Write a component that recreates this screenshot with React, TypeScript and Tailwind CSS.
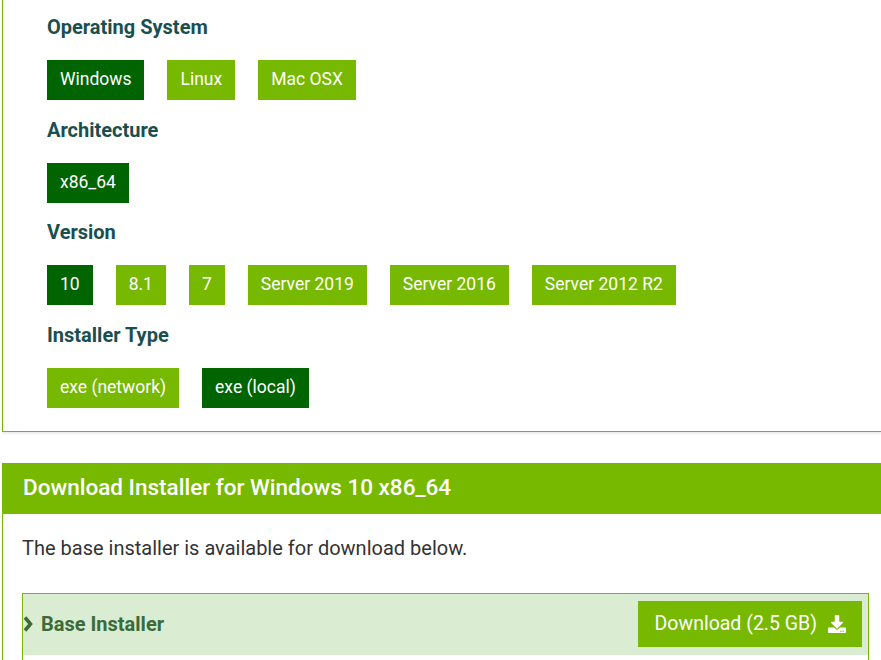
import React from 'react';
import { FaDownload } from 'react-icons/fa';

type Opt = { label: string; active?: boolean };

const sections: { title: string; options: Opt[] }[] = [
  { title: 'Operating System', options: [{ label: 'Windows', active: true }, { label: 'Linux' }, { label: 'Mac OSX' }] },
  { title: 'Architecture', options: [{ label: 'x86_64', active: true }] },
  {
    title: 'Version',
    options: [
      { label: '10', active: true },
      { label: '8.1' },
      { label: '7' },
      { label: 'Server 2019' },
      { label: 'Server 2016' },
      { label: 'Server 2012 R2' },
    ],
  },
  { title: 'Installer Type', options: [{ label: 'exe (network)' }, { label: 'exe (local)', active: true }] },
];

const OptionButton: React.FC<Opt> = ({ label, active }) => (
  <button
    className={
      'h-10 px-[13px] text-[17.5px] text-white leading-none ' + (active ? 'bg-[#006400]' : 'bg-[#76b900]')
    }
  >
    {label}
  </button>
);

const App: React.FC = () => {
  return (
    <div className="w-[881px] h-[660px] overflow-hidden bg-white pl-[2px] font-['Roboto',sans-serif]">
      {/* selector panel */}
      <div className="border-l border-b border-[#76b900] pl-[44px] pt-[15px] pb-[23px] shadow-[0_2px_2px_rgba(0,0,0,0.08)]">
        {sections.map((s, i) => (
          <div key={s.title} className={i > 0 ? 'mt-[17.5px]' : ''}>
            <h3 className="text-[20px] leading-6 font-bold text-[#1a4f50] mb-[21px]">{s.title}</h3>
            <div className="flex gap-[23px]">
              {s.options.map((o) => (
                <OptionButton key={o.label} {...o} />
              ))}
            </div>
          </div>
        ))}
      </div>

      {/* download panel */}
      <div className="mt-[31px]">
        <div className="h-[51px] bg-[#76b900] flex items-center pl-[21px]">
          <h2 className="text-[22.5px] font-medium text-white">Download Installer for Windows 10 x86_64</h2>
        </div>
        <div className="border-l border-[#76b900] pl-[19px] pt-[22px]">
          <p className="text-[20px] leading-6 text-[#333]">The base installer is available for download below.</p>
          <div className="mt-[33px] w-[847px] border border-[#76b900]">
            <div className="h-[61px] bg-[#daecd2] flex items-center justify-between pr-[6px]">
              <div className="flex items-center text-[#3b6b3b] font-bold text-[20px]">
                <svg width="10" height="18" viewBox="0 0 10 18" className="shrink-0 w-[10px] h-[18px] mr-[8px]">
                  <polyline points="2,2.5 7.5,9 2,15.5" fill="none" stroke="currentColor" strokeWidth="3.5" />
                </svg>
                Base Installer
              </div>
              <button className="h-[46px] bg-[#76b900] text-white text-[19.5px] pl-[17px] pr-[15px] flex items-center gap-[10px]">
                Download (2.5 GB)
                <FaDownload className="w-[20px] h-[18px]" />
              </button>
            </div>
            <div className="h-10 bg-white" />
          </div>
        </div>
      </div>
    </div>
  );
};

export default App;
